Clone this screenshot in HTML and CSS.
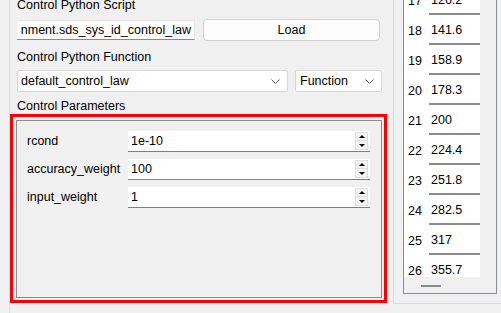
FILE: index.html
```html
<!DOCTYPE html>
<html>
<head>
<meta charset="utf-8">
<link rel="stylesheet" href="styles.css">
</head>
<body>
<div class="window">
  <div class="left">
    <div class="label first">Control Python Script</div>
    <div class="row script-row">
      <div class="lineedit"><span>nment.sds_sys_id_control_law</span></div>
      <button class="btn">Load</button>
    </div>
    <div class="label l2">Control Python Function</div>
    <div class="row combo-row">
      <div class="combo wide"><span>default_control_law</span><svg class="chev" width="9" height="6" viewBox="0 0 9 6"><polyline points="0.5,0.5 4.5,4.5 8.5,0.5" fill="none" stroke="#606060" stroke-width="1"/></svg></div>
      <div class="combo narrow"><span>Function</span><svg class="chev" width="9" height="6" viewBox="0 0 9 6"><polyline points="0.5,0.5 4.5,4.5 8.5,0.5" fill="none" stroke="#606060" stroke-width="1"/></svg></div>
    </div>
    <div class="label l3">Control Parameters</div>
    <div class="group-wrap">
      <div class="group">
        <div class="param">
          <div class="pname">rcond</div>
          <div class="spin"><span class="val">1e-10</span><div class="arrows"><div class="ab"><i class="up"></i></div><div class="ab"><i class="down"></i></div></div></div>
        </div>
        <div class="param">
          <div class="pname">accuracy_weight</div>
          <div class="spin"><span class="val">100</span><div class="arrows"><div class="ab"><i class="up"></i></div><div class="ab"><i class="down"></i></div></div></div>
        </div>
        <div class="param">
          <div class="pname">input_weight</div>
          <div class="spin"><span class="val">1</span><div class="arrows"><div class="ab"><i class="up"></i></div><div class="ab"><i class="down"></i></div></div></div>
        </div>
      </div>
      <div class="highlight"></div>
    </div>
  </div>
  <div class="right">
    <div class="frame">
      <div class="viewport">
        <div class="rows">
          <div class="trow"><div class="hd">17</div><div class="cell">126.2</div></div>
          <div class="trow"><div class="hd">18</div><div class="cell">141.6</div></div>
          <div class="trow"><div class="hd">19</div><div class="cell">158.9</div></div>
          <div class="trow"><div class="hd">20</div><div class="cell">178.3</div></div>
          <div class="trow"><div class="hd">21</div><div class="cell">200</div></div>
          <div class="trow"><div class="hd">22</div><div class="cell">224.4</div></div>
          <div class="trow"><div class="hd">23</div><div class="cell">251.8</div></div>
          <div class="trow"><div class="hd">24</div><div class="cell">282.5</div></div>
          <div class="trow"><div class="hd">25</div><div class="cell">317</div></div>
          <div class="trow"><div class="hd">26</div><div class="cell">355.7</div></div>
        </div>
      </div>
      <div class="hscroll"><div class="handle"></div></div>
    </div>
  </div>
</div>
</body>
</html>
```
FILE: styles.css
```css
html, body {
  margin: 0;
  padding: 0;
}
body {
  background: #f0f0f0;
  font-family: "Liberation Sans", Arial, sans-serif;
  font-size: 12.5px;
  color: #000;
  width: 501px;
  height: 313px;
  overflow: hidden;
}
.window {
  display: flex;
  height: 313px;
}
.left {
  box-sizing: border-box;
  width: 384px;
  margin-left: 9px;
  border-left: 1px solid #e4e4e4;
  padding-left: 7px;
  display: flex;
  flex-direction: column;
}
.label {
  line-height: 14px;
  height: 14px;
  white-space: nowrap;
}
.label.first { margin-top: -2px; }
.label.l2 { margin-top: 9px; }
.label.l3 { margin-top: 7px; }
.row {
  display: flex;
  align-items: center;
}
.script-row {
  margin-top: 7px;
  height: 22px;
}
.lineedit {
  box-sizing: border-box;
  width: 178px;
  height: 20px;
  background: #fff;
  border-top: 1px solid #e6e6e6;
  border-right: 1px solid #e6e6e6;
  border-bottom: 1px solid #8a8a8a;
  display: flex;
  justify-content: flex-end;
  align-items: center;
  overflow: hidden;
  padding-right: 3px;
  white-space: nowrap;
}
.btn {
  box-sizing: border-box;
  margin-left: 8px;
  width: 177px;
  height: 22px;
  background: #fdfdfd;
  border: 1px solid #d0d0d0;
  border-radius: 4px;
  font: inherit;
  color: #000;
  padding: 0;
}
.combo-row {
  margin-top: 6px;
  height: 22px;
}
.combo {
  box-sizing: border-box;
  height: 22px;
  background: #fff;
  border: 1px solid #d6d6d6;
  border-radius: 2px;
  display: flex;
  align-items: center;
  justify-content: space-between;
  padding: 0 7px 0 3px;
  white-space: nowrap;
}
.combo.wide { width: 271px; }
.combo.narrow { width: 87px; margin-left: 7px; padding-left: 4px; }
.chev { display: block; margin-top: 1px; }
.group-wrap {
  position: relative;
  margin-top: 7px;
  margin-left: -1px;
  width: 366px;
  height: 178px;
}
.group {
  box-sizing: border-box;
  width: 366px;
  height: 178px;
  border: 1px solid #888c93;
  padding: 10px 10px 0 10px;
  display: flex;
  flex-direction: column;
  gap: 7px;
}
.param {
  display: flex;
  align-items: center;
  height: 21px;
}
.pname {
  width: 101px;
  white-space: nowrap;
  line-height: 21px;
}
.spin {
  box-sizing: border-box;
  width: 242px;
  height: 21px;
  background: #fff;
  border-bottom: 1px solid #7f7f7f;
  display: flex;
  justify-content: space-between;
  align-items: flex-start;
  padding-left: 3px;
}
.val {
  line-height: 20px;
}
.arrows {
  display: flex;
  flex-direction: column;
  margin: 1px 2px 0 0;
}
.ab {
  box-sizing: border-box;
  width: 13px;
  height: 9px;
  background: #f3f3f3;
  border: 1px solid #dedede;
  display: flex;
  align-items: center;
  justify-content: center;
}
.ab + .ab { border-top: 0; }
.up {
  width: 0; height: 0;
  border-left: 3px solid transparent;
  border-right: 3px solid transparent;
  border-bottom: 3px solid #000;
}
.down {
  width: 0; height: 0;
  border-left: 3px solid transparent;
  border-right: 3px solid transparent;
  border-top: 3px solid #000;
}
.highlight {
  position: absolute;
  left: -6px;
  top: -6px;
  right: -5px;
  bottom: -5px;
  border: 3px solid #ff0000;
  pointer-events: none;
}
.right {
  box-sizing: border-box;
  flex: 1;
  margin-top: -5px;
  height: 309px;
  border-left: 1px solid #d9d9d9;
  border-top: 1px solid #d9d9d9;
  border-bottom: 1px solid #d9d9d9;
  padding: 0 0 9px 9px;
  display: flex;
  flex-direction: column;
}
.frame {
  box-sizing: border-box;
  flex: 1;
  width: 94px;
  border: 1px solid #888c93;
  display: flex;
  flex-direction: column;
}
.viewport {
  height: 280px;
  overflow: hidden;
}
.rows {
  margin-top: -12px;
}
.trow {
  display: flex;
  height: 30px;
}
.hd {
  box-sizing: border-box;
  width: 25px;
  height: 30px;
  background: #fff;
  padding: 2px 0 0 4px;
  line-height: 28px;
}
.cell {
  box-sizing: border-box;
  width: 51px;
  height: 30px;
  background: #fff;
  border-bottom: 2px solid #8c8c8c;
  padding: 2px 0 0 2px;
  line-height: 26px;
}
.hscroll {
  flex: 1;
  position: relative;
}
.handle {
  position: absolute;
  left: 17px;
  top: 8px;
  width: 20px;
  height: 2px;
  background: #8a8a8a;
}
```
